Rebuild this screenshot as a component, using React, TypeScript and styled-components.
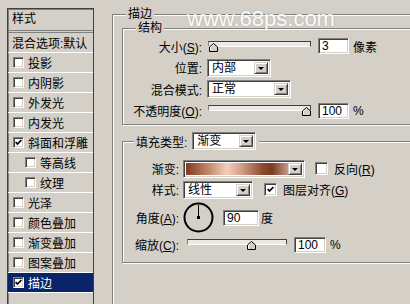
import React from 'react';
import styled, { createGlobalStyle } from 'styled-components';

const GlobalStyle = createGlobalStyle`
  html, body {
    margin: 0;
    padding: 0;
    background: #d4d0c8;
    overflow: hidden;
  }
  body {
    font-family: "Liberation Sans", "Noto Sans CJK SC", sans-serif;
    font-size: 12px;
    color: #000;
  }
`;

const Dialog = styled.div`
  position: relative;
  display: flex;
  align-items: flex-start;
  width: 410px;
  height: 304px;
  box-sizing: border-box;
  padding: 8px 0 0 7px;
  overflow: hidden;
  background: #d4d0c8;
`;

const Watermark = styled.div`
  position: absolute;
  left: 187px;
  top: 8px;
  font-family: "Liberation Sans", sans-serif;
  font-size: 22px;
  line-height: 22px;
  color: #fff;
  opacity: 0.92;
  text-shadow: 0 0 2px rgba(90, 90, 90, 0.35);
  pointer-events: none;
  white-space: nowrap;
`;

/* ---------- left style list ---------- */

const StyleList = styled.div`
  flex: none;
  width: 87px;
  height: 310px;
  box-sizing: border-box;
  border: 1px solid #404040;
  border-bottom: none;
  box-shadow: inset 1px 1px 0 #808080;
`;

const ListHeader = styled.div`
  height: 21px;
  line-height: 21px;
  padding-left: 4px;
  border-bottom: 3px double #808080;
`;

const ListRow = styled.div<{ $indent?: boolean; $selected?: boolean; $plain?: boolean }>`
  display: flex;
  align-items: center;
  gap: 4px;
  height: 19px;
  padding-left: ${(p) => (p.$plain ? 4 : p.$indent ? 17 : 5)}px;
  border-bottom: 1px solid #fff;
  background: ${(p) => (p.$selected ? '#0a246a' : 'transparent')};
  color: ${(p) => (p.$selected ? '#fff' : '#000')};
  white-space: nowrap;
`;

const CheckBox = styled.span<{ $size?: number }>`
  flex: none;
  display: inline-flex;
  align-items: center;
  justify-content: center;
  width: ${(p) => p.$size ?? 11}px;
  height: ${(p) => p.$size ?? 11}px;
  box-sizing: border-box;
  background: #fff;
  border-top: 1px solid #808080;
  border-left: 1px solid #808080;
  border-right: 1px solid #fff;
  border-bottom: 1px solid #fff;
  box-shadow: inset 1px 1px 0 #404040, inset -1px -1px 0 #d4d0c8;
`;

const CheckMark = () => (
  <svg width="7" height="7" viewBox="0 0 7 7">
    <polyline points="0.6,3 2.5,5 6.4,1" fill="none" stroke="#000" strokeWidth="1.7" />
  </svg>
);

/* ---------- group boxes ---------- */

const GroupBox = styled.fieldset`
  margin: 0;
  padding: 0;
  min-width: 0;
  box-sizing: border-box;
  border: 1px solid #808080;
  box-shadow: inset 1px 1px 0 #fff, 1px 1px 0 #fff;
`;

const StrokeGroup = styled(GroupBox)`
  flex: none;
  width: 330px;
  height: 312px;
  margin: -2px 0 0 18px;
  padding: 0 0 0 9px;
`;

const StructureGroup = styled(GroupBox)`
  margin-top: -3px;
  padding: 0 0 3px 0;
`;

const FillGroup = styled(GroupBox)`
  margin-top: 7px;
  padding: 8px 0 8px 0;
`;

const Legend = styled.legend<{ $offset: number }>`
  margin-left: ${(p) => p.$offset}px;
  padding: 0 2px;
  line-height: 17px;
  background: #d4d0c8;
`;

const FillLegend = styled.legend`
  display: flex;
  align-items: center;
  gap: 5px;
  height: 18px;
  margin-left: 11px;
  padding: 0 3px 0 2px;
  background: #d4d0c8;
`;

const Rows = styled.div<{ $shift?: number }>`
  display: flex;
  flex-direction: column;
  margin-top: ${(p) => p.$shift ?? 0}px;
`;

const FieldRow = styled.div<{ $height: number }>`
  display: flex;
  align-items: center;
  height: ${(p) => p.$height}px;
  white-space: nowrap;
`;

const FieldLabel = styled.span<{ $width: number; $gap: number }>`
  flex: none;
  width: ${(p) => p.$width}px;
  margin-right: ${(p) => p.$gap}px;
  text-align: right;
`;

const Controls = styled.div<{ $gap?: number }>`
  display: flex;
  align-items: center;
  gap: ${(p) => p.$gap ?? 0}px;
`;

const Unit = styled.span<{ $gap?: number }>`
  margin-left: ${(p) => p.$gap ?? 4}px;
`;

/* ---------- controls ---------- */

const sunken = `
  background: #fff;
  border-top: 1px solid #808080;
  border-left: 1px solid #808080;
  border-right: 1px solid #fff;
  border-bottom: 1px solid #fff;
  box-shadow: inset 1px 1px 0 #404040, inset -1px -1px 0 #d4d0c8;
`;

const NumberField = styled.input<{ $width: number }>`
  width: ${(p) => p.$width}px;
  height: 16px;
  box-sizing: border-box;
  margin: 0;
  padding: 0 0 0 3px;
  font: 12px "Liberation Sans", sans-serif;
  color: #000;
  outline: none;
  ${sunken}
`;

const Select = styled.div<{ $width: number; $shift?: number }>`
  display: flex;
  align-items: stretch;
  width: ${(p) => p.$width}px;
  height: 18px;
  box-sizing: border-box;
  margin-left: ${(p) => p.$shift ?? 0}px;
  padding: 1px 2px 2px 2px;
  ${sunken}
`;

const SelectText = styled.span`
  flex: 1;
  padding-left: 2px;
  font-size: 12px;
  line-height: 14px;
  white-space: nowrap;
`;

const GradientStrip = styled.span`
  flex: 1;
  margin-top: 1px;
  background: linear-gradient(
    to right,
    #7d3b22 0%,
    #b9775c 18%,
    #f3cdbb 40%,
    #d19c84 55%,
    #8e4a30 75%,
    #7b3a22 84%,
    #c49786 100%
  );
`;

const SelectButton = styled.span`
  flex: none;
  display: flex;
  align-items: center;
  justify-content: center;
  width: 14px;
  margin-top: 1px;
  box-sizing: border-box;
  background: #d4d0c8;
  border-top: 1px solid #d4d0c8;
  border-left: 1px solid #d4d0c8;
  border-right: 1px solid #404040;
  border-bottom: 1px solid #404040;
  box-shadow: inset 1px 1px 0 #fff, inset -1px -1px 0 #808080;

  &::after {
    content: '';
    border-left: 3px solid transparent;
    border-right: 3px solid transparent;
    border-top: 3px solid #000;
    margin-top: 1px;
  }
`;

const SliderBox = styled.div<{ $width: number; $shift?: number }>`
  position: relative;
  width: ${(p) => p.$width}px;
  height: 11px;
  margin-left: ${(p) => p.$shift ?? 0}px;
`;

const SliderTrack = styled.div`
  height: 6px;
  box-sizing: border-box;
  background: #ece9e3;
  border-top: 1px solid #404040;
  border-left: 1px solid #808080;
  border-right: 1px solid #404040;
  border-bottom: 1px solid #fff;
`;

const SliderThumb = styled.svg`
  position: absolute;
  top: 2px;
`;

const Slider = ({ width, value, min, max, shift }: { width: number; value: number; min: number; max: number; shift?: number }) => {
  const left = Math.round(((value - min) / (max - min)) * (width - 9));
  return (
    <SliderBox $width={width} $shift={shift}>
      <SliderTrack />
      <SliderThumb width="9" height="9" viewBox="0 0 9 9" style={{ left }}>
        <polygon points="0.5,4 4.5,0.5 8.5,4 8.5,8.5 0.5,8.5" fill="#d4d0c8" stroke="#000" strokeWidth="1" />
        <polyline points="1.5,7.5 1.5,4.4 4.5,1.8" fill="none" stroke="#fff" strokeWidth="1" />
      </SliderThumb>
    </SliderBox>
  );
};

const AngleDial = ({ angle }: { angle: number }) => {
  const r = (angle * Math.PI) / 180;
  const x2 = 15.5 + Math.cos(r) * 12.5;
  const y2 = 15.5 - Math.sin(r) * 12.5;
  return (
    <svg width="31" height="31" viewBox="0 0 31 31">
      <circle cx="15.5" cy="15.5" r="14" fill="none" stroke="#000" strokeWidth="2" />
      <line x1="15.5" y1="15.5" x2={x2} y2={y2} stroke="#000" strokeWidth="1" />
      <rect x="14" y="14" width="3" height="3" fill="#000" />
    </svg>
  );
};

const Key = ({ k }: { k: string }) => (
  <>
    (<u>{k}</u>)
  </>
);

/* ---------- data ---------- */

type StyleItem = { label: string; checked?: boolean; indent?: boolean; selected?: boolean };

const STYLE_ITEMS: StyleItem[] = [
  { label: '投影' },
  { label: '内阴影' },
  { label: '外发光' },
  { label: '内发光' },
  { label: '斜面和浮雕', checked: true },
  { label: '等高线', indent: true },
  { label: '纹理', indent: true },
  { label: '光泽' },
  { label: '颜色叠加' },
  { label: '渐变叠加' },
  { label: '图案叠加' },
  { label: '描边', checked: true, selected: true },
];

export default function App() {
  return (
    <>
      <GlobalStyle />
      <Dialog>
        <StyleList>
          <ListHeader>样式</ListHeader>
          <ListRow $plain>混合选项:默认</ListRow>
          {STYLE_ITEMS.map((item) => (
            <ListRow key={item.label} $indent={item.indent} $selected={item.selected}>
              <CheckBox>{item.checked && <CheckMark />}</CheckBox>
              {item.label}
            </ListRow>
          ))}
        </StyleList>

        <StrokeGroup>
          <Legend $offset={4}>描边</Legend>

          <StructureGroup>
            <Legend $offset={13}>结构</Legend>
            <Rows $shift={-2}>
              <FieldRow $height={22}>
                <FieldLabel $width={79} $gap={6}>
                  大小<Key k="S" />:
                </FieldLabel>
                <Slider width={103} value={3} min={0} max={250} />
                <NumberField $width={31} defaultValue="3" readOnly style={{ marginLeft: 7 }} />
                <Unit>像素</Unit>
              </FieldRow>
              <FieldRow $height={21}>
                <FieldLabel $width={79} $gap={6}>位置:</FieldLabel>
                <Select $width={64} $shift={-1}>
                  <SelectText>内部</SelectText>
                  <SelectButton />
                </Select>
              </FieldRow>
              <FieldRow $height={22}>
                <FieldLabel $width={79} $gap={6}>混合模式:</FieldLabel>
                <Select $width={84} $shift={-1}>
                  <SelectText>正常</SelectText>
                  <SelectButton />
                </Select>
              </FieldRow>
              <FieldRow $height={21}>
                <FieldLabel $width={79} $gap={6}>
                  不透明度<Key k="O" />:
                </FieldLabel>
                <Slider width={103} value={100} min={0} max={100} />
                <NumberField $width={31} defaultValue="100" readOnly style={{ marginLeft: 7 }} />
                <Unit>%</Unit>
              </FieldRow>
            </Rows>
          </StructureGroup>

          <FillGroup>
            <FillLegend>
              填充类型:
              <Select $width={64}>
                <SelectText>渐变</SelectText>
                <SelectButton />
              </Select>
            </FillLegend>
            <Rows>
              <FieldRow $height={21}>
                <FieldLabel $width={56} $gap={4}>渐变:</FieldLabel>
                <Controls>
                  <Select $width={122}>
                    <GradientStrip />
                    <SelectButton />
                  </Select>
                  <CheckBox $size={13} style={{ marginLeft: 10 }} />
                  <Unit $gap={6}>
                    反向<Key k="R" />
                  </Unit>
                </Controls>
              </FieldRow>
              <FieldRow $height={21}>
                <FieldLabel $width={56} $gap={4}>样式:</FieldLabel>
                <Controls>
                  <Select $width={70}>
                    <SelectText>线性</SelectText>
                    <SelectButton />
                  </Select>
                  <CheckBox $size={13} style={{ marginLeft: 11 }}>
                    <CheckMark />
                  </CheckBox>
                  <Unit $gap={6}>
                    图层对齐<Key k="G" />
                  </Unit>
                </Controls>
              </FieldRow>
              <FieldRow $height={35}>
                <FieldLabel $width={56} $gap={4}>
                  角度<Key k="A" />:
                </FieldLabel>
                <Controls $gap={9}>
                  <AngleDial angle={90} />
                  <NumberField $width={36} defaultValue="90" readOnly />
                </Controls>
                <Unit $gap={2}>度</Unit>
              </FieldRow>
              <FieldRow $height={19}>
                <FieldLabel $width={56} $gap={4}>
                  缩放<Key k="C" />:
                </FieldLabel>
                <Slider width={100} value={100} min={1} max={150} shift={4} />
                <NumberField $width={32} defaultValue="100" readOnly style={{ marginLeft: 7 }} />
                <Unit>%</Unit>
              </FieldRow>
            </Rows>
          </FillGroup>
        </StrokeGroup>

        <Watermark>www.68ps.com</Watermark>
      </Dialog>
    </>
  );
}
